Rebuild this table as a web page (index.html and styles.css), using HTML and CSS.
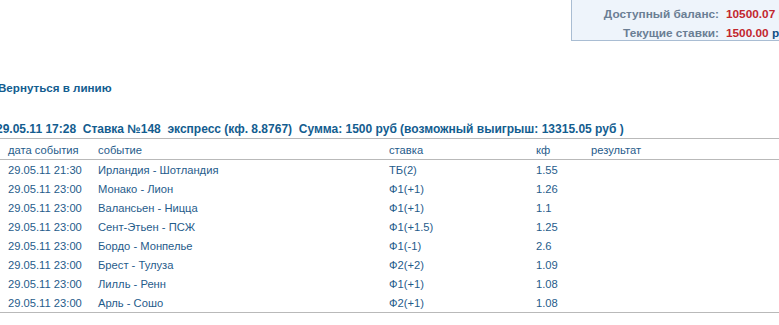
FILE: index.html
```html
<!DOCTYPE html>
<html lang="ru">
<head>
<meta charset="utf-8">
<link rel="stylesheet" href="styles.css">
</head>
<body>
<div class="page">
  <div class="top">
    <div class="balance">
      <div class="brow"><span class="blabel">Доступный баланс:</span><span class="bval">10500.07 <span class="cur">руб</span></span></div>
      <div class="brow"><span class="blabel">Текущие ставки:</span><span class="bval">1500.00 <span class="cur">руб</span></span></div>
    </div>
  </div>
  <a class="back" href="#">Вернуться в линию</a>
  <div class="summary">29.05.11 17:28&nbsp; Ставка №148&nbsp; экспресс (кф. 8.8767)&nbsp; Сумма: 1500 руб (возможный выигрыш: 13315.05 руб )</div>
  <table class="bets">
    <colgroup><col class="c-date"><col class="c-ev"><col class="c-st"><col class="c-kf"><col class="c-res"></colgroup>
    <thead>
      <tr><th>дата события</th><th>событие</th><th>ставка</th><th>кф</th><th>результат</th></tr>
    </thead>
    <tbody>
      <tr><td>29.05.11 21:30</td><td>Ирландия - Шотландия</td><td>ТБ(2)</td><td>1.55</td><td></td></tr>
      <tr><td>29.05.11 23:00</td><td>Монако - Лион</td><td>Ф1(+1)</td><td>1.26</td><td></td></tr>
      <tr><td>29.05.11 23:00</td><td>Валансьен - Ницца</td><td>Ф1(+1)</td><td>1.1</td><td></td></tr>
      <tr><td>29.05.11 23:00</td><td>Сент-Этьен - ПСЖ</td><td>Ф1(+1.5)</td><td>1.25</td><td></td></tr>
      <tr><td>29.05.11 23:00</td><td>Бордо - Монпелье</td><td>Ф1(-1)</td><td>2.6</td><td></td></tr>
      <tr><td>29.05.11 23:00</td><td>Брест - Тулуза</td><td>Ф2(+2)</td><td>1.09</td><td></td></tr>
      <tr><td>29.05.11 23:00</td><td>Лилль - Ренн</td><td>Ф1(+1)</td><td>1.08</td><td></td></tr>
      <tr><td>29.05.11 23:00</td><td>Арль - Сошо</td><td>Ф2(+1)</td><td>1.08</td><td></td></tr>
    </tbody>
  </table>
</div>
</body>
</html>
```
FILE: styles.css
```css
html, body {
  margin: 0;
  padding: 0;
  background: #ffffff;
  overflow: hidden;
}
body {
  font-family: "Liberation Sans", Arial, sans-serif;
  font-size: 11.2px;
  color: #1f5c8b;
  width: 779px;
}
.page {
  width: 779px;
}
.top {
  display: flex;
  justify-content: flex-start;
  padding-left: 571px;
  height: 42px;
}
.balance {
  flex: none;
  width: 260px;
  height: 41px;
  box-sizing: border-box;
  background: #eef4fb;
  border-left: 1px solid #a9bdd3;
  border-bottom: 1px solid #a9bdd3;
  padding-top: 4px;
  font-size: 11.8px;
}
.brow {
  display: flex;
  height: 19px;
  align-items: center;
  font-weight: bold;
}
.blabel {
  width: 147px;
  text-align: right;
  color: #6a7e94;
  padding-right: 7px;
}
.bval {
  color: #c2262e;
  white-space: nowrap;
}
.cur {
  color: #0f4f86;
}
.back {
  display: block;
  margin: 39px 0 0 -2px;
  font-weight: bold;
  font-size: 11.6px;
  color: #135d8f;
  text-decoration: none;
  line-height: 14px;
}
.summary {
  margin: 27px 0 0 -4px;
  font-weight: bold;
  color: #135d8f;
  line-height: 14px;
  white-space: nowrap;
  font-size: 12px;
}
.bets {
  margin-top: 2px;
  width: 779px;
  table-layout: fixed;
  border-collapse: collapse;
  border-top: 1px solid #b9b9b9;
  border-bottom: 1px solid #b9b9b9;
}
.bets th, .bets td {
  font-weight: normal;
  text-align: left;
  line-height: 14px;
  padding: 3px 0 2px 0;
  vertical-align: top;
  white-space: nowrap;
}
.bets th {
  border-bottom: 1px solid #b9b9b9;
  padding-top: 4px;
}
.bets th:first-child, .bets td:first-child {
  padding-left: 8px;
}
.c-date { width: 98px; }
.c-ev { width: 291px; }
.c-st { width: 147px; }
.c-kf { width: 55px; }
```
